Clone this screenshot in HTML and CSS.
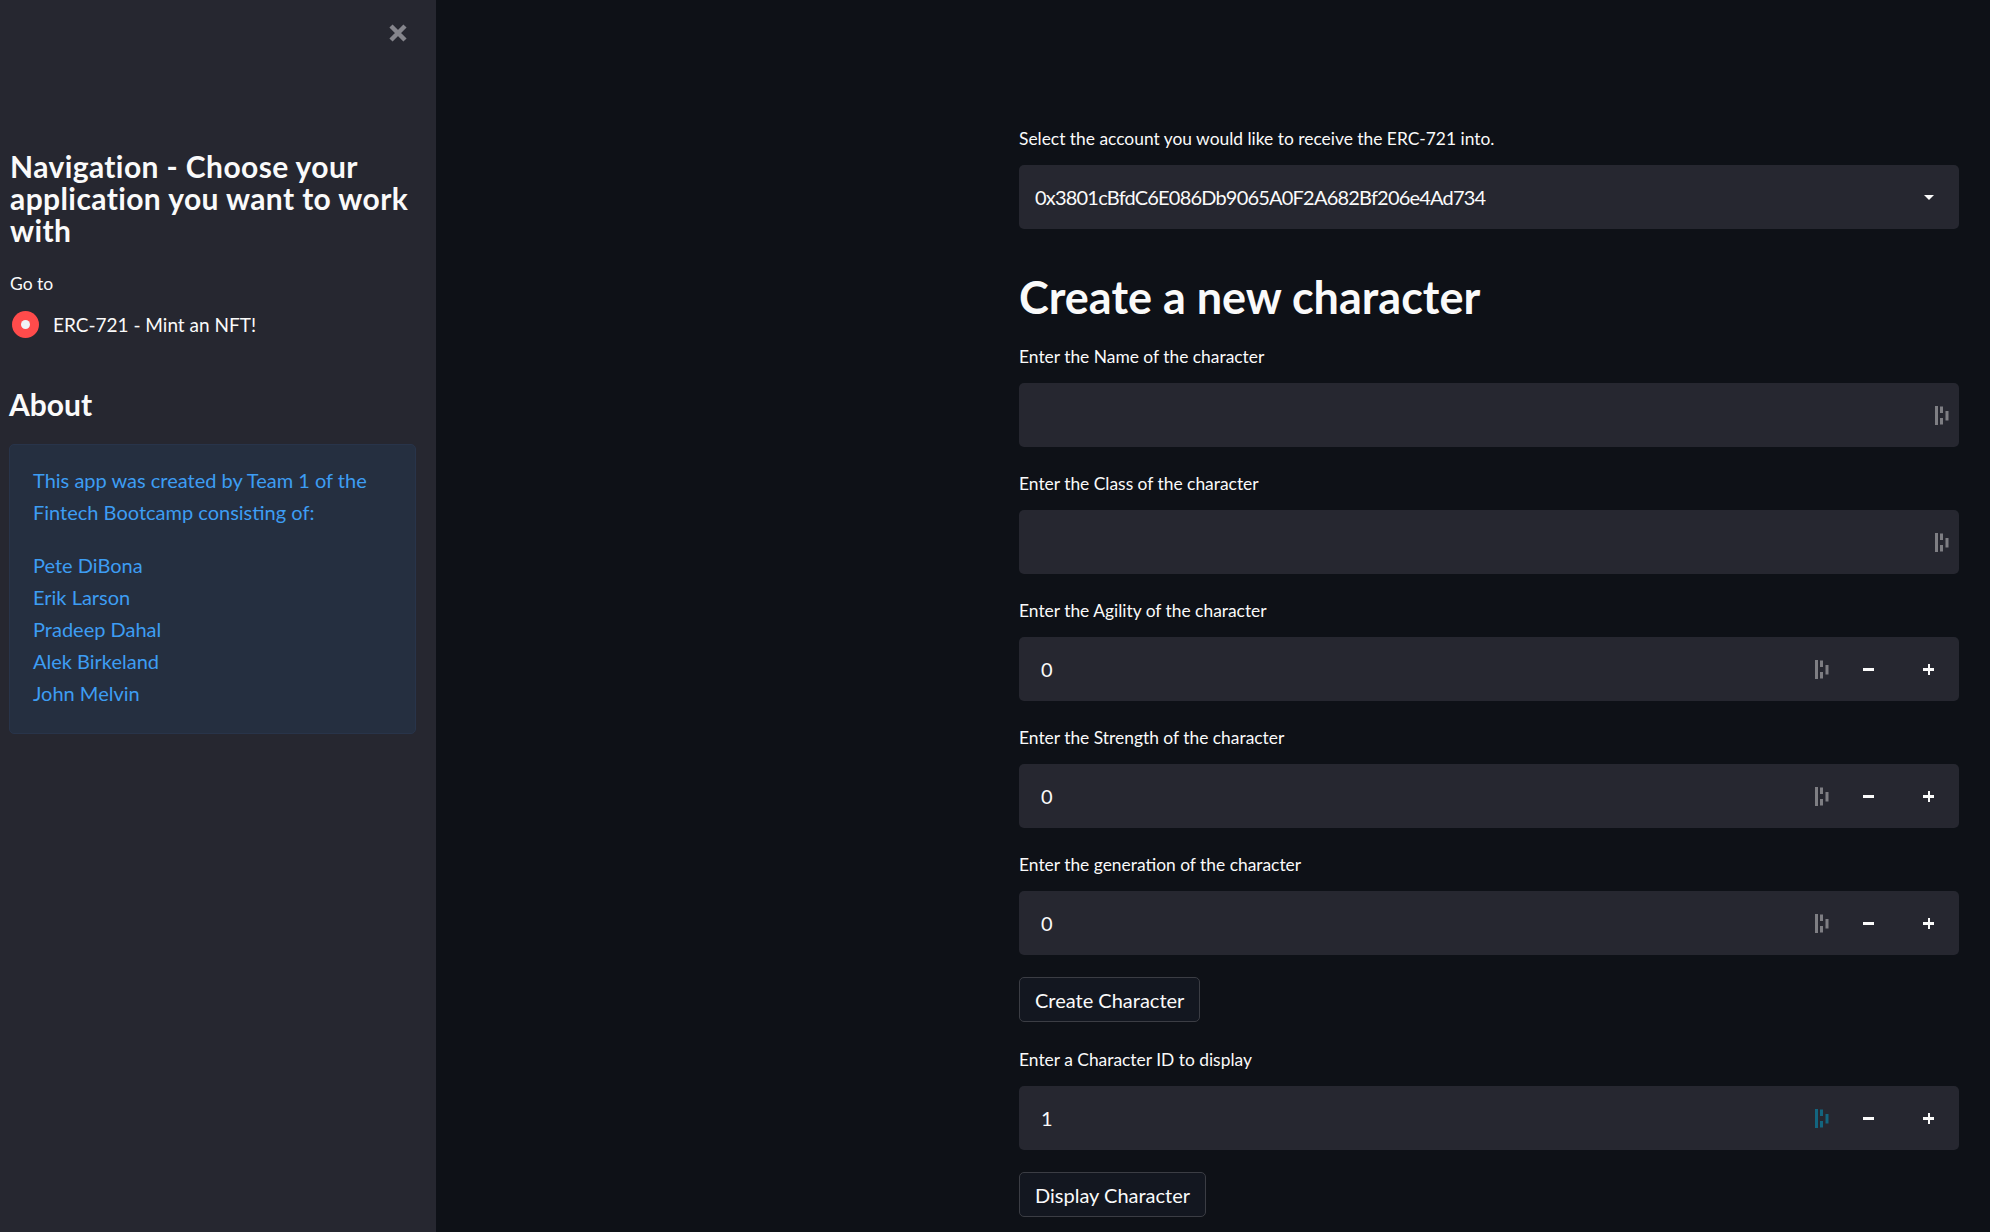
FILE: index.html
```html
<!DOCTYPE html>
<html lang="en">
<head>
<meta charset="utf-8">
<title>ERC-721 - Mint an NFT!</title>
<link rel="stylesheet" href="styles.css">
</head>
<body>
<div class="app">
  <aside class="sidebar">
    <div class="close-row">
      <svg class="close" width="20" height="20" viewBox="0 0 20 20"><path d="M3 3L17 17M17 3L3 17" stroke="#85858c" stroke-width="4.5"/></svg>
    </div>
    <h2 class="side-title">Navigation - Choose your application you want to work with</h2>
    <div class="side-label">Go to</div>
    <div class="radio-row">
      <span class="radio"><span class="radio-dot"></span></span>
      <span class="radio-text">ERC-721 - Mint an NFT!</span>
    </div>
    <h2 class="about-title">About</h2>
    <div class="info">
      <p class="info-p">This app was created by Team 1 of the Fintech Bootcamp consisting of:</p>
      <p class="info-p">Pete DiBona<br>Erik Larson<br>Pradeep Dahal<br>Alek Birkeland<br>John Melvin</p>
    </div>
  </aside>
  <main class="main">
    <div class="content">
      <div class="field">
        <div class="label">Select the account you would like to receive the ERC-721 into.</div>
        <div class="box select">
          <span class="value">0x3801cBfdC6E086Db9065A0F2A682Bf206e4Ad734</span>
          <span class="caret"></span>
        </div>
      </div>

      <h1 class="title">Create a new character</h1>

      <div class="field">
        <div class="label">Enter the Name of the character</div>
        <div class="box text">
          <span class="value"></span>
          <svg class="pm" width="14" height="19" viewBox="0 0 14 19"><rect x="0" y="0" width="3" height="19"/><rect x="5" y="0.5" width="3" height="6.5"/><rect x="5" y="12" width="3" height="6.5"/><rect x="10.5" y="5" width="3" height="9.5"/></svg>
        </div>
      </div>

      <div class="field">
        <div class="label">Enter the Class of the character</div>
        <div class="box text">
          <span class="value"></span>
          <svg class="pm" width="14" height="19" viewBox="0 0 14 19"><rect x="0" y="0" width="3" height="19"/><rect x="5" y="0.5" width="3" height="6.5"/><rect x="5" y="12" width="3" height="6.5"/><rect x="10.5" y="5" width="3" height="9.5"/></svg>
        </div>
      </div>

      <div class="field">
        <div class="label">Enter the Agility of the character</div>
        <div class="box number">
          <span class="value">0</span>
          <svg class="pm" width="14" height="19" viewBox="0 0 14 19"><rect x="0" y="0" width="3" height="19"/><rect x="5" y="0.5" width="3" height="6.5"/><rect x="5" y="12" width="3" height="6.5"/><rect x="10.5" y="5" width="3" height="9.5"/></svg>
          <div class="steps"><span class="step minus"></span><span class="step plus"></span></div>
        </div>
      </div>

      <div class="field">
        <div class="label">Enter the Strength of the character</div>
        <div class="box number">
          <span class="value">0</span>
          <svg class="pm" width="14" height="19" viewBox="0 0 14 19"><rect x="0" y="0" width="3" height="19"/><rect x="5" y="0.5" width="3" height="6.5"/><rect x="5" y="12" width="3" height="6.5"/><rect x="10.5" y="5" width="3" height="9.5"/></svg>
          <div class="steps"><span class="step minus"></span><span class="step plus"></span></div>
        </div>
      </div>

      <div class="field">
        <div class="label">Enter the generation of the character</div>
        <div class="box number">
          <span class="value">0</span>
          <svg class="pm" width="14" height="19" viewBox="0 0 14 19"><rect x="0" y="0" width="3" height="19"/><rect x="5" y="0.5" width="3" height="6.5"/><rect x="5" y="12" width="3" height="6.5"/><rect x="10.5" y="5" width="3" height="9.5"/></svg>
          <div class="steps"><span class="step minus"></span><span class="step plus"></span></div>
        </div>
      </div>

      <button class="btn btn-create">Create Character</button>

      <div class="field field-id">
        <div class="label">Enter a Character ID to display</div>
        <div class="box number">
          <span class="value">1</span>
          <svg class="pm pm-active" width="14" height="19" viewBox="0 0 14 19"><rect x="0" y="0" width="3" height="19"/><rect x="5" y="0.5" width="3" height="6.5"/><rect x="5" y="12" width="3" height="6.5"/><rect x="10.5" y="5" width="3" height="9.5"/></svg>
          <div class="steps"><span class="step minus"></span><span class="step plus"></span></div>
        </div>
      </div>

      <button class="btn btn-display">Display Character</button>
    </div>
  </main>
</div>
</body>
</html>
```

FILE: styles.css
```css
* { box-sizing: border-box; }

html, body {
  margin: 0;
  padding: 0;
  height: 100%;
}

body {
  background: #0e1117;
  color: #fafafa;
  font-family: Lato, "Open Sans", sans-serif;
  overflow: hidden;
}

.app {
  display: flex;
  width: 1990px;
  height: 1232px;
}

/* ---------- Sidebar ---------- */
.sidebar {
  width: 436px;
  flex: 0 0 436px;
  background: #262730;
  padding: 0 20px 0 9px;
}

.close-row {
  display: flex;
  justify-content: flex-end;
  padding-top: 23px;
  padding-right: 8px;
}

.close { display: block; }

.side-title {
  margin: 107px 0 0 1px;
  font-size: 30px;
  line-height: 32px;
  letter-spacing: 0.4px;
  font-weight: 700;
  color: #fafafa;
}

.side-label {
  margin: 26px 0 0 1px;
  font-size: 17.5px;
  line-height: 24px;
}

.radio-row {
  display: flex;
  align-items: center;
  gap: 14px;
  margin-top: 15px;
  padding-left: 3px;
}

.radio {
  width: 27px;
  height: 27px;
  border-radius: 50%;
  background: #ff4b4b;
  display: flex;
  align-items: center;
  justify-content: center;
  flex: 0 0 27px;
}

.radio-dot {
  width: 9px;
  height: 9px;
  border-radius: 50%;
  background: #f0f2f6;
}

.radio-text {
  font-size: 19px;
  line-height: 27px;
}

.about-title {
  margin: 48px 0 0 0;
  font-size: 30px;
  line-height: 36px;
  font-weight: 700;
}

.info {
  margin-top: 22px;
  background: #252f40;
  border: 1px solid #28344a;
  border-radius: 5px;
  padding: 19px 20px 24px 23px;
  color: #3d9df3;
  font-size: 20px;
  line-height: 32px;
}

.info-p { margin: 0; }
.info-p + .info-p { margin-top: 21px; }

/* ---------- Main ---------- */
.main {
  flex: 1;
  padding: 127px 31px 0 583px;
}

.content {
  width: 940px;
  display: flex;
  flex-direction: column;
  align-items: flex-start;
}

.field {
  width: 100%;
  margin-bottom: 25px;
}

.label {
  font-size: 17.4px;
  line-height: 24px;
  margin-bottom: 14px;
  color: #fafafa;
}

.box {
  position: relative;
  height: 64px;
  background: #262730;
  border-radius: 5px;
  display: flex;
  align-items: center;
  padding-left: 16px;
  font-size: 20px;
}

.number { padding-left: 22px; }

.value { flex: 1; }

.select .value { letter-spacing: -0.8px; }

.caret {
  width: 0;
  height: 0;
  border-left: 5px solid transparent;
  border-right: 5px solid transparent;
  border-top: 5px solid #fafafa;
  margin-right: 25px;
}

.pm { fill: #7e7e83; display: block; }
.pm-active { fill: #13657f; }

.text .pm { margin-right: 10px; }

.number .pm { margin-right: 10px; }

.steps {
  display: flex;
  width: 120px;
  height: 100%;
}

.step {
  width: 60px;
  height: 100%;
  position: relative;
}

.step::before,
.step.plus::after {
  content: "";
  position: absolute;
  left: 24px;
  top: 31px;
  width: 11px;
  height: 2.5px;
  background: #fafafa;
}

.step.plus::after {
  left: 28.5px;
  top: 26.5px;
  width: 2.5px;
  height: 11px;
}

.title {
  margin: 13px 0 18px 0;
  font-size: 45px;
  line-height: 60px;
  font-weight: 700;
  color: #fafafa;
}

.btn {
  height: 45px;
  padding: 0 15px;
  background: #131720;
  border: 1px solid #3b3d44;
  border-radius: 5px;
  color: #fafafa;
  font-family: inherit;
  font-size: 20px;
  margin: -3px 0 26px 0;
}

.field-id { margin-bottom: 25px; }
```
